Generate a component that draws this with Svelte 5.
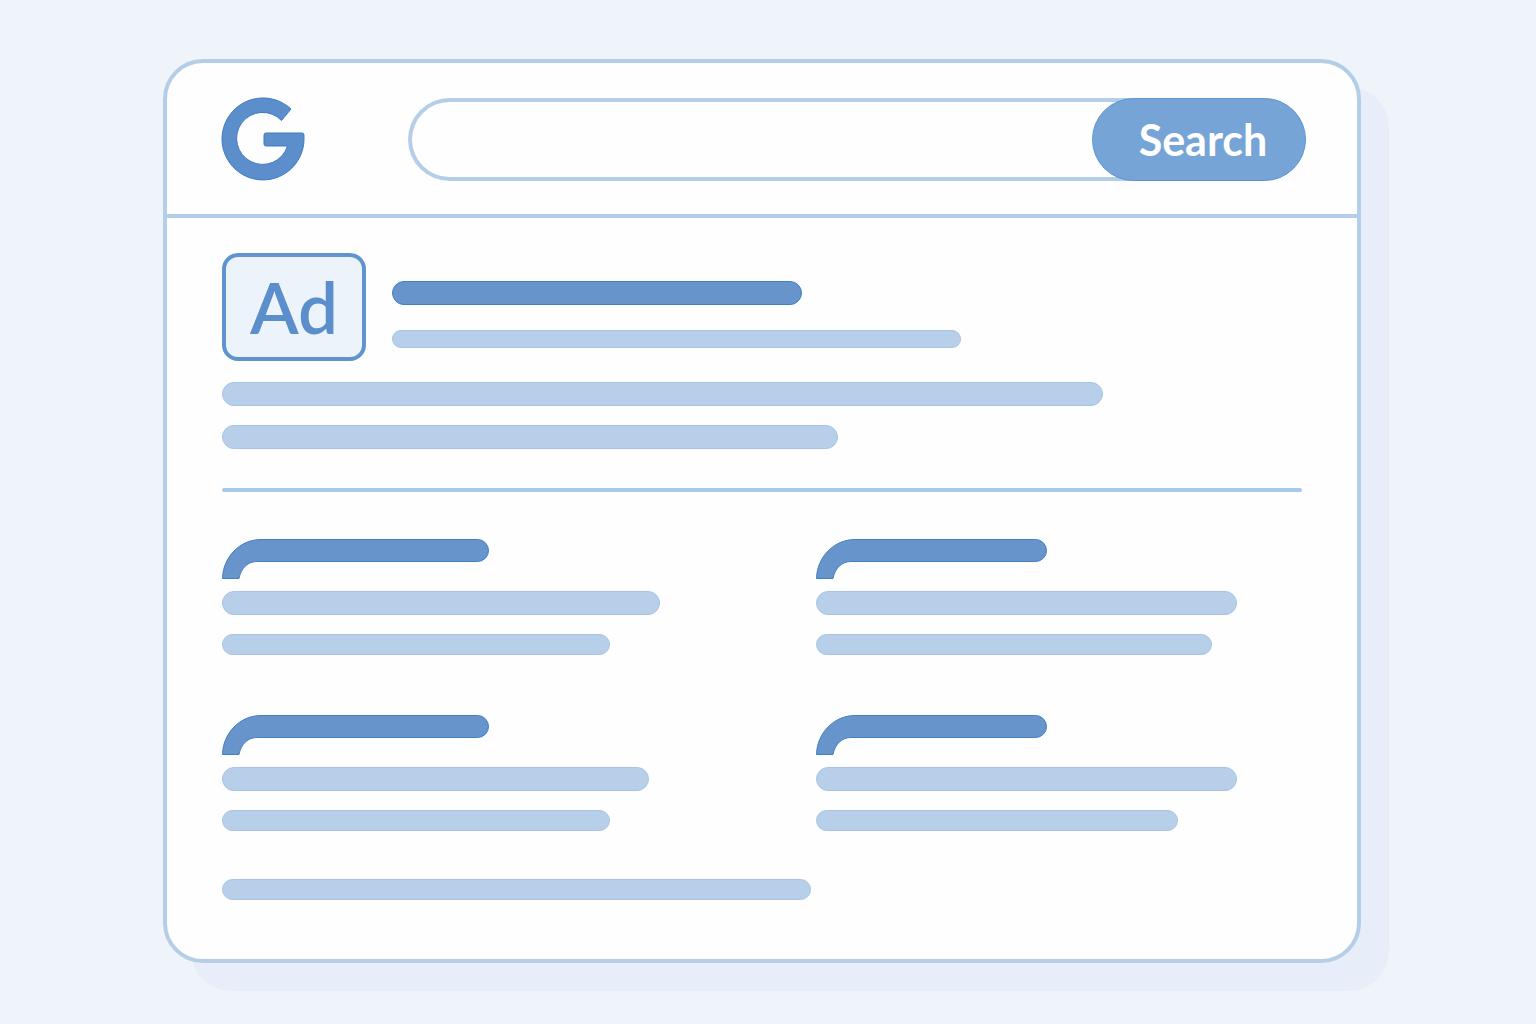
<script lang="ts">
    type Result = { title: number; lines: number[] };

    let query = $state("");

    const results: Result[] = [
        { title: 267, lines: [438, 388] },
        { title: 231, lines: [421, 396] },
        { title: 267, lines: [427, 388] },
        { title: 231, lines: [421, 362] },
    ];

    // Bar with a curved tail that drops down on its left end
    function hookPath(w: number) {
        return `M0.5 39.5C1 18 18 0.5 39 0.5H${w - 11.5}a11 11 0 0 1 0 22H35C26 22.5 19 29 17 39.5Z`;
    }
</script>

<div class="window">
    <header>
        <svg class="logo" viewBox="0 0 84 83" aria-label="G" role="img">
            <path
                d="M70 11A41 41 0 1 0 83 41.5V37Q83 35 81 35H45Q43 35 43 37V46Q43 48 45 48H66.5A26 26 0 1 1 60.5 22.5Z"
            />
        </svg>
        <form class="search" onsubmit={(e) => e.preventDefault()}>
            <input type="text" aria-label="Search query" bind:value={query} />
            <button type="submit">Search</button>
        </form>
    </header>

    <main>
        <section class="ad">
            <div class="ad-top">
                <div class="badge">Ad</div>
                <div class="ad-head">
                    <div class="bar dark" style:width="410px"></div>
                    <div class="bar thin" style:width="569px"></div>
                </div>
            </div>
            <div class="bar" style:width="881px"></div>
            <div class="bar" style:width="616px"></div>
        </section>

        <hr />

        <div class="results">
            {#each results as result}
                <article>
                    <svg class="hook" width={result.title} height="40">
                        <path d={hookPath(result.title)} />
                    </svg>
                    <div class="bar" style:width="{result.lines[0]}px"></div>
                    <div class="bar small" style:width="{result.lines[1]}px"></div>
                </article>
            {/each}
        </div>

        <div class="bar small" style:width="589px"></div>
    </main>
</div>

<style>
    :global(body) {
        margin: 0;
        background: #eff4fb;
        font-family: Lato, "Open Sans", sans-serif;
    }

    .window {
        margin: 59px 175px 60px 163px;
        border: 4px solid #b5cee8;
        border-radius: 40px;
        background: #fefefe;
        box-shadow: 28px 28px 0 #e8eef9;
    }

    header {
        display: flex;
        align-items: center;
        gap: 103px;
        padding: 35px 51px 33px 54px;
        border-bottom: 4px solid #b5cee8;
    }

    .logo {
        flex: none;
        width: 84px;
        height: 83px;
        overflow: visible;
    }

    .logo path {
        fill: #5b8ecb;
        stroke: #3f7cc3;
        stroke-width: 1;
    }

    .search {
        display: flex;
        flex: 1;
        min-width: 0;
        height: 83px;
    }

    .search input {
        flex: 1;
        min-width: 0;
        box-sizing: border-box;
        margin-right: -44px;
        padding: 0 60px 0 36px;
        border: 4px solid #b5cee8;
        border-right: none;
        border-radius: 42px 0 0 42px;
        outline: none;
        background: #fefefe;
        color: #5b8ecb;
        font: 32px Lato, sans-serif;
    }

    .search button {
        position: relative;
        flex: none;
        width: 214px;
        padding: 0 0 0 8px;
        border: 1px solid #5a95d2;
        border-radius: 42px;
        background: #76a4d6;
        color: #fff;
        font: bold 43px Lato, sans-serif;
        cursor: pointer;
    }

    main {
        padding: 35px 55px 59px;
    }

    .ad {
        display: flex;
        flex-direction: column;
        gap: 19px;
    }

    .ad-top {
        display: flex;
        gap: 26px;
        margin-bottom: 2px;
    }

    .badge {
        display: flex;
        align-items: center;
        justify-content: center;
        flex: none;
        box-sizing: border-box;
        width: 144px;
        height: 108px;
        border: 4px solid #6094cf;
        border-radius: 16px;
        background: #edf3fb;
        color: #5b8ecb;
        font-size: 71px;
        font-weight: 600;
        line-height: 96px;
    }

    .ad-head {
        display: flex;
        flex: 1;
        flex-direction: column;
        gap: 25px;
        padding-top: 28px;
    }

    .bar {
        box-sizing: border-box;
        max-width: 100%;
        height: 24px;
        border: 1px solid #a6c5e5;
        border-radius: 12px;
        background: #b7cfe8;
    }

    .bar.thin {
        height: 18px;
    }

    .bar.small {
        height: 21px;
    }

    .bar.dark {
        border-color: #4180c6;
        background: #6694cb;
    }

    hr {
        height: 4px;
        margin: 39px 0 47px;
        border: none;
        border-radius: 2px;
        background: #a9c8e7;
    }

    .results {
        display: grid;
        grid-template-columns: 11fr 9fr;
        row-gap: 60px;
        margin-bottom: 48px;
    }

    .hook {
        display: block;
        margin-bottom: 12px;
    }

    .hook path {
        fill: #6694cb;
        stroke: #4180c6;
        stroke-width: 1;
    }

    article .small {
        margin-top: 19px;
    }
</style>
